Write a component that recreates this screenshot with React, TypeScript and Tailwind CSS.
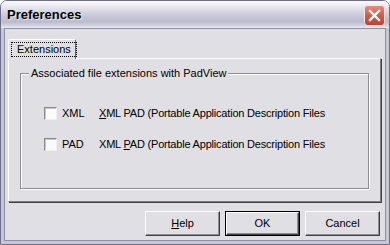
const font = { fontFamily: '"Liberation Sans", Arial, sans-serif' };

function CloseButton() {
  return (
    <svg width="21" height="21" viewBox="0 0 21 21">
      <defs>
        <linearGradient id="cb" x1="0" y1="0" x2="0" y2="1">
          <stop offset="0" stopColor="#e98e80" />
          <stop offset="0.5" stopColor="#d45a48" />
          <stop offset="1" stopColor="#c04030" />
        </linearGradient>
      </defs>
      <rect x="0.5" y="0.5" width="20" height="20" rx="3" fill="url(#cb)" stroke="#f4e6e2" />
      <path d="M6 6 L15 15 M15 6 L6 15" stroke="#fff" strokeWidth="2.4" strokeLinecap="square" />
    </svg>
  );
}

function Check() {
  return (
    <span className="block w-[13px] h-[13px] border border-t-[#8a8a8a] border-l-[#8a8a8a] border-b-[#f0f0f0] border-r-[#f0f0f0] bg-[#fbfbfb] shadow-[inset_1px_1px_0_#c8c8c8]" />
  );
}

function Row({ ext, first, rest }: { ext: string; first: number; rest?: boolean }) {
  const desc = "XML PAD (Portable Application Description Files";
  return (
    <div className="flex items-center h-[13px]">
      <Check />
      <span className="ml-[5px] w-[37px]">{ext}</span>
      <span className="tracking-[-0.2px] whitespace-nowrap">
        {desc.slice(0, first)}
        <span className="underline underline-offset-[1px]">{desc[first]}</span>
        {desc.slice(first + 1)}
      </span>
    </div>
  );
}

function Button({ label, u, def }: { label: string; u?: boolean; def?: boolean }) {
  return (
    <button
      className={
        "w-[75px] h-[25px] text-[11px] text-black bg-[#e0dfe3] " +
        (def ? "border border-black " : "")
      }
    >
      <span className="flex h-full w-full items-center justify-center border border-t-white border-l-white border-b-[#404040] border-r-[#404040] shadow-[inset_-1px_-1px_0_#8e8e8e]">
        {u ? (
          <>
            <span className="underline underline-offset-[1px]">{label[0]}</span>
            {label.slice(1)}
          </>
        ) : (
          label
        )}
      </span>
    </button>
  );
}

export default function App() {
  return (
    <div className="w-[390px] h-[245px] bg-white text-black" style={font}>
      <div className="flex flex-col h-full border border-[#6f6f8c] rounded-t-[7px] overflow-hidden">
        <div className="h-[27px] flex items-center pl-[6px] pr-[4px] bg-[linear-gradient(to_bottom,#fbfbfd_0%,#e4e4ec_25%,#c4c4d4_60%,#bcbccd_78%,#d6d6e2_92%,#ececf2_100%)]">
          <span className="text-[13px] font-bold text-black [text-shadow:1px_1px_0_rgba(255,255,255,0.6)]">Preferences</span>
          <span className="ml-auto mt-[2px]">
            <CloseButton />
          </span>
        </div>
        <div className="flex-1 flex flex-col border-x-[3px] border-b-[3px] border-[#c6c6d6]">
          <div className="flex-1 flex flex-col border border-[#8e8ea8] bg-[#e0dfe3] pt-[10px] pl-[3px] text-[11px]">
            <div className="flex">
              <div className="relative z-10 -mb-px h-[20px] w-[68px] border-l border-t border-r border-l-white border-t-white border-r-[#606060] rounded-t-[2px] bg-[#e0dfe3] flex items-start pt-[2px] pl-[2px]">
                <span className="px-[5px] h-[15px] flex items-center border border-dotted border-black">Extensions</span>
              </div>
            </div>
            <div className="w-[373px] h-[144px] border border-l-white border-t-white border-r-[#808080] border-b-[#808080] shadow-[1px_1px_0_#404040] pt-[14px] pl-[11px]">
              <div className="relative w-[349px] h-[116px] border border-[#8e8e8e] shadow-[inset_1px_1px_0_#fff,1px_1px_0_#fff] pt-[33px] pl-[23px] flex flex-col gap-[18px]">
                <span className="absolute -top-[7px] left-[8px] px-[2px] bg-[#e0dfe3] leading-[13px]">
                  Associated file extensions with PadView
                </span>
                <Row ext="XML" first={0} />
                <Row ext="PAD" first={4} />
              </div>
            </div>
            <div className="flex justify-end gap-[5px] mt-[9px] pr-[5px]">
              <Button label="Help" u />
              <Button label="OK" def />
              <Button label="Cancel" />
            </div>
          </div>
        </div>
      </div>
    </div>
  );
}
